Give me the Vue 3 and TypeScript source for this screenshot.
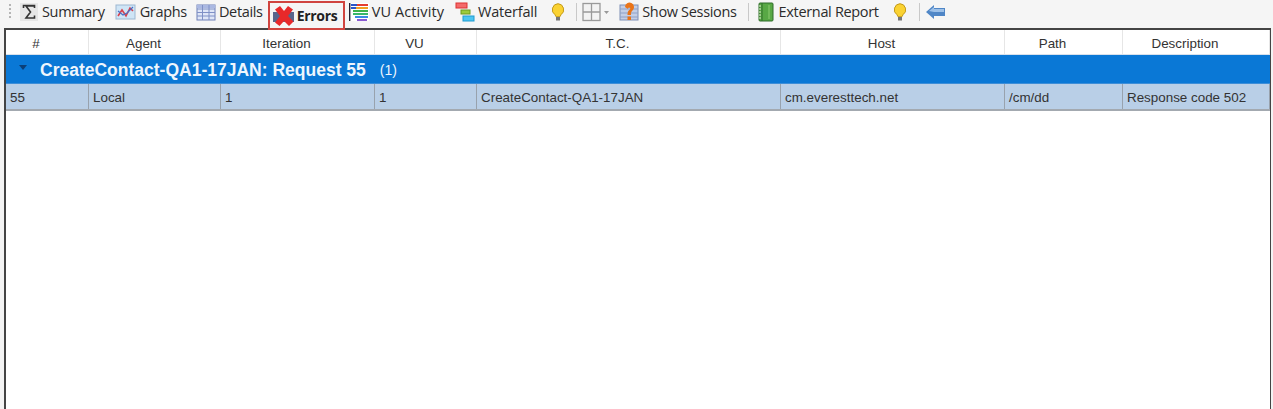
<script setup lang="ts">
const columns = ['#', 'Agent', 'Iteration', 'VU', 'T.C.', 'Host', 'Path', 'Description']
const cells = ['55', 'Local', '1', '1', 'CreateContact-QA1-17JAN', 'cm.everesttech.net', '/cm/dd', 'Response code 502']
</script>

<template>
  <div class="page">
    <div class="toolbar">
      <span class="grip"></span>
      <span class="tool t-summary">
        <svg class="ic" viewBox="0 0 18 18"><rect x="0" y="0" width="18" height="18" fill="#e6e6e6"/><path d="M3.500 5V2.500h11V5M14 3H6l4.500 6L6 15h8.500v-2.500" fill="none" stroke="#333" stroke-width="1.600"/></svg>
        <span>Summary</span>
      </span>
      <span class="tool t-graphs">
        <svg class="ic" viewBox="0 0 21 18"><rect x="1" y="2" width="19" height="14" fill="#cfe5f6" stroke="#9db8d2"/><path d="M3 13l4-6 4 6 4-8 3 3" fill="none" stroke="#d8404c" stroke-width="1.600"/><path d="M3 8l5 4 4-2 6-6" fill="none" stroke="#4b6fc4" stroke-width="1.200"/></svg>
        <span>Graphs</span>
      </span>
      <span class="tool t-details">
        <svg class="ic" viewBox="0 0 20 18"><rect x="1" y="2" width="18" height="15" fill="#dfe6f7" stroke="#6f80b8"/><rect x="1" y="2" width="18" height="3" fill="#aab8e2"/><path d="M1 6h18M1 9.500h18M1 13h18M6.500 2v15M13 2v15" stroke="#7f90c6"/></svg>
        <span>Details</span>
      </span>
      <span class="tool t-errors">
        <svg class="ic" viewBox="0 0 22 20"><rect x="0" y="6" width="21" height="10" fill="#58658c"/><path d="M2 3.500L7 0l4 5 4-5 5 3.500L15 10l5.500 5.500L16 20l-5-5-4.500 5L2 16.500 7 10z" fill="#e8282a"/></svg>
        <b>Errors</b>
      </span>
      <span class="tool t-vu">
        <svg class="ic" viewBox="0 0 20 18"><rect width="20" height="18" fill="#fff"/><path d="M0.700 0v18" stroke="#223" stroke-width="1.400"/><path d="M2 2h7" stroke="#2a56c8" stroke-width="2"/><path d="M8 2h11" stroke="#e43d2f" stroke-width="2"/><path d="M2 5h5" stroke="#2a56c8" stroke-width="2"/><path d="M7 5h12" stroke="#f0a020" stroke-width="2"/><path d="M4 8h15" stroke="#3cb44a" stroke-width="2"/><path d="M4 11h15" stroke="#38b86a" stroke-width="2"/><path d="M6 14h13" stroke="#3a8ce0" stroke-width="2"/><path d="M8 17h10" stroke="#8a5ad0" stroke-width="2"/></svg>
        <span>VU Activity</span>
      </span>
      <span class="tool t-water">
        <svg class="ic" viewBox="0 0 20 20"><rect x="1" y="1" width="11" height="5" fill="#f46a6a" stroke="#d33"/><rect x="6" y="8" width="9" height="4" fill="#9ccb3a" stroke="#6d9a20"/><rect x="8" y="14" width="11" height="5" fill="#4cc5f0" stroke="#1e9ad0"/></svg>
        <span>Waterfall</span>
      </span>
      <svg class="bulb b1" viewBox="0 0 14 18"><path d="M7 .700a6 6 0 0 0-3 11l1 2h4l1-2a6 6 0 0 0-3-11z" fill="#fad232" stroke="#c49a18"/><rect x="5" y="14" width="4" height="3.500" fill="#777"/></svg>
      <span class="sep s1"></span>
      <svg class="gridbtn" viewBox="0 0 28 20"><rect x="1" y="1.500" width="17" height="17" fill="#f3f3f3" stroke="#9a9a9a" stroke-width="1.300"/><path d="M9.500 1.500v17M1 10h17" stroke="#9a9a9a" stroke-width="1.300"/><path d="M22 9h5l-2.500 3z" fill="#999"/></svg>
      <span class="tool t-sessions">
        <svg class="ic" viewBox="0 0 20 20"><rect x="1" y="3" width="18" height="15" fill="#c3cee6" stroke="#7f8fb5"/><path d="M1 7h18M1 11h18M1 15h18" stroke="#8fa0c6"/><path d="M6 5a4.500 4.500 0 1 1 7.500 3.500C12 10 12 11 12 13H8.500c0-3 .7-4.300 2.300-5.400.8-.7.5-1.800-.6-1.800-.8 0-1.200.5-1.200 1.200z" fill="#ea7418"/><rect x="8.500" y="14.500" width="3.500" height="3.500" fill="#ea7418"/></svg>
        <span>Show Sessions</span>
      </span>
      <span class="sep s2"></span>
      <span class="tool t-report">
        <svg class="ic" viewBox="0 0 16 20"><rect x="1" y="1" width="14" height="18" rx="1" fill="#58a845" stroke="#2f6d2a"/><path d="M4 1v18" stroke="#2f6d2a"/><path d="M11 3v14" stroke="#8ccc70"/><path d="M1 4h2M1 7h2M1 10h2M1 13h2M1 16h2" stroke="#e6f0d8"/></svg>
        <span>External Report</span>
      </span>
      <svg class="bulb b2" viewBox="0 0 14 18"><path d="M7 .700a6 6 0 0 0-3 11l1 2h4l1-2a6 6 0 0 0-3-11z" fill="#fad232" stroke="#c49a18"/><rect x="5" y="14" width="4" height="3.500" fill="#777"/></svg>
      <span class="sep s3"></span>
      <svg class="back" viewBox="0 0 19 14"><path d="M0 7l8-7v3h11v8H8v3z" fill="#4f86c6"/><path d="M3 6l5-4v2h10v3H8z" fill="#9cc0e8"/></svg>
    </div>

    <div class="panel">
      <div class="grid head">
        <div v-for="c in columns" :key="c" class="hcell">{{ c }}</div>
      </div>
      <div class="group">
        <span class="caret"></span>
        <span class="gtitle">CreateContact-QA1-17JAN: Request 55</span>
        <span class="gcount">(1)</span>
      </div>
      <div class="grid row">
        <div v-for="(c, i) in cells" :key="i" class="cell">{{ c }}</div>
      </div>
    </div>
  </div>
</template>

<style>
html, body { margin: 0; background: #fff; overflow: hidden; }
</style>

<style scoped>
.page {
  width: 1273px;
  height: 409px;
  display: flex;
  flex-direction: column;
  background: #f3f3f3;
  overflow: hidden;
  color: #2b2b2b;
}
.toolbar {
  height: 28px;
  box-sizing: border-box;
  padding-bottom: 5px;
  flex: none;
  display: flex;
  align-items: center;
  font: 14.5px "Open Sans", sans-serif;
  letter-spacing: -0.33px;
  background: #f5f5f5;
  white-space: nowrap;
}
.grip {
  width: 2px;
  height: 16px;
  margin-left: 9px;
  margin-right: 9px;
  background: repeating-linear-gradient(#b5b5b5 0 2px, transparent 2px 4px);
}
.tool { display: flex; align-items: center; gap: 4px; flex: none; }
.ic { width: 20px; height: 18px; flex: none; }
.t-summary .ic { width: 18px; height: 18px; }
.t-graphs { margin-left: 10px; }
.t-graphs .ic { width: 21px; }
.t-details { margin-left: 9px; gap: 3px; }
.t-errors {
  margin-left: 5px;
  box-sizing: border-box;
  width: 77px;
  height: 29px;
  margin-top: 1px;
  align-self: flex-start;
  padding-left: 3px;
  border: 2px solid #d0443f;
  gap: 2px;
  position: relative;
  z-index: 1;
  font-size: 14px;
  letter-spacing: -0.3px;
  color: #222;
}
.t-errors .ic { width: 22px; height: 20px; }
.t-vu { margin-left: 4px; gap: 3px; letter-spacing: 0.1px; }
.t-water { margin-left: 11px; gap: 3px; letter-spacing: -0.2px; }
.t-water .ic { height: 20px; }
.bulb { width: 14px; height: 18px; flex: none; }
.b1 { margin-left: 14px; }
.sep { width: 1px; height: 18px; background: #c9c9c9; flex: none; }
.s1 { margin-left: 11px; }
.gridbtn { width: 28px; height: 20px; margin-left: 5px; flex: none; }
.t-sessions { margin-left: 9px; gap: 3px; }
.t-sessions .ic { height: 20px; }
.s2 { margin-left: 11px; }
.t-report { margin-left: 9px; gap: 5px; }
.t-report .ic { width: 16px; height: 20px; }
.b2 { margin-left: 14px; }
.s3 { margin-left: 12px; }
.back { width: 19px; height: 14px; margin-left: 6px; flex: none; }

.panel {
  flex: 1;
  margin-left: 4px;
  margin-right: 2px;
  border: 1px solid #444;
  border-width: 2px 1px 0 2px;
  background: #fff;
  font: 13.4px "Liberation Sans", sans-serif;
  color: #333;
}
.grid {
  display: grid;
  grid-template-columns: 83px 132px 154px 102px 304px 224px 118px 1fr;
}
.head { height: 25px; border-bottom: 1px solid #d8e1ec; box-sizing: border-box; }
.hcell {
  display: flex;
  align-items: center;
  justify-content: center;
  padding: 2px 22px 0 0;
  border-right: 1px solid #e6e6e6;
  box-sizing: border-box;
}
.group {
  height: 29px;
  box-sizing: border-box;
  padding-top: 2px;
  background: #0a78d6;
  color: #eef6fd;
  display: flex;
  align-items: center;
  border-bottom: 1px solid #3d8ed8;
}
.caret {
  width: 0;
  height: 0;
  margin-left: 13px;
  border: 4px solid transparent;
  border-top: 5px solid #0b3f78;
  border-bottom: 0;
  margin-top: -5px;
}
.gtitle { margin-left: 13px; font-weight: 700; font-size: 17.5px; }
.gcount { margin-left: 14px; font-size: 14px; }
.row { height: 27px; background: #b9cfe7; border-bottom: 2px solid #a3a9b0; box-sizing: border-box; }
.cell {
  display: flex;
  align-items: center;
  padding: 1px 0 0 4px;
  border-right: 1px solid #98a2ad;
  box-sizing: border-box;
  white-space: nowrap;
}
</style>
